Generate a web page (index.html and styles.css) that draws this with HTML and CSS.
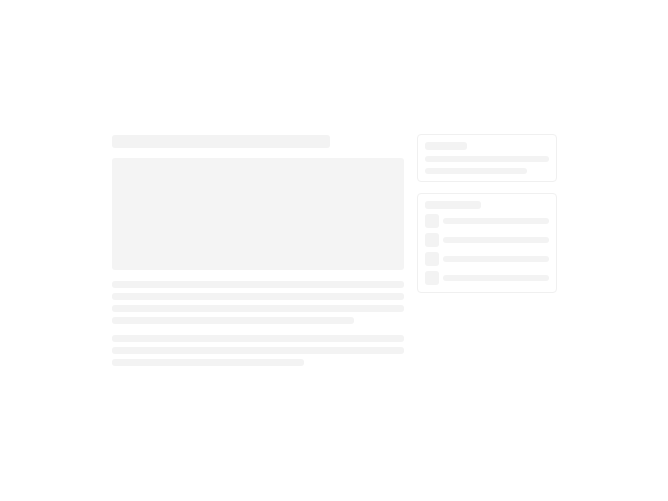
FILE: index.html
```html
<!DOCTYPE html>
<html lang="en">
<head>
<meta charset="utf-8">
<title>Loading</title>
<link rel="stylesheet" href="styles.css">
</head>
<body>
<div class="layout">
  <main class="main">
    <div class="sk title"></div>
    <div class="sk hero"></div>
    <div class="para">
      <div class="sk line"></div>
      <div class="sk line"></div>
      <div class="sk line"></div>
      <div class="sk line w83"></div>
    </div>
    <div class="para">
      <div class="sk line"></div>
      <div class="sk line"></div>
      <div class="sk line w66"></div>
    </div>
  </main>
  <aside class="side">
    <div class="card">
      <div class="sk card-title short"></div>
      <div class="card-lines">
        <div class="sk cline"></div>
        <div class="sk cline w83"></div>
      </div>
    </div>
    <div class="card">
      <div class="sk card-title"></div>
      <div class="rows">
        <div class="row"><div class="sk sq"></div><div class="sk rline"></div></div>
        <div class="row"><div class="sk sq"></div><div class="sk rline"></div></div>
        <div class="row"><div class="sk sq"></div><div class="sk rline"></div></div>
        <div class="row"><div class="sk sq"></div><div class="sk rline"></div></div>
      </div>
    </div>
  </aside>
</div>
</body>
</html>
```

FILE: styles.css
```css
html, body {
  margin: 0;
  padding: 0;
  background: #ffffff;
  font-family: "Liberation Sans", Arial, sans-serif;
}
body {
  height: 100vh;
  display: flex;
  align-items: center;
  justify-content: center;
}
.layout {
  display: flex;
  align-items: flex-start;
  gap: 13px;
  width: 445px;
  padding-bottom: 2px;
}
.sk {
  background: #f3f3f3;
  border-radius: 3px;
}
.main {
  width: 292px;
  padding-top: 1px;
  display: flex;
  flex-direction: column;
  gap: 11px;
}
.title {
  width: 218px;
  height: 13px;
  margin-bottom: -1px;
}
.hero {
  height: 112px;
  background: #f4f4f4;
}
.para {
  display: flex;
  flex-direction: column;
  gap: 5px;
}
.line {
  height: 7px;
}
.w83 { width: 83%; }
.w66 { width: 66%; }
.side {
  width: 140px;
  display: flex;
  flex-direction: column;
  gap: 11px;
}
.card {
  border: 1px solid #f0f0f0;
  border-radius: 4px;
  padding: 7px;
  display: flex;
  flex-direction: column;
}
.card-title {
  width: 56px;
  height: 8px;
  margin-bottom: 5px;
}
.card-title.short {
  width: 42px;
  margin-bottom: 6px;
}
.card-lines {
  display: flex;
  flex-direction: column;
  gap: 6px;
}
.cline {
  height: 6px;
}
.rows {
  display: flex;
  flex-direction: column;
  gap: 5px;
}
.row {
  display: flex;
  align-items: center;
  gap: 4px;
}
.sq {
  width: 14px;
  height: 14px;
  flex: none;
}
.rline {
  flex: 1;
  height: 6px;
}
```
